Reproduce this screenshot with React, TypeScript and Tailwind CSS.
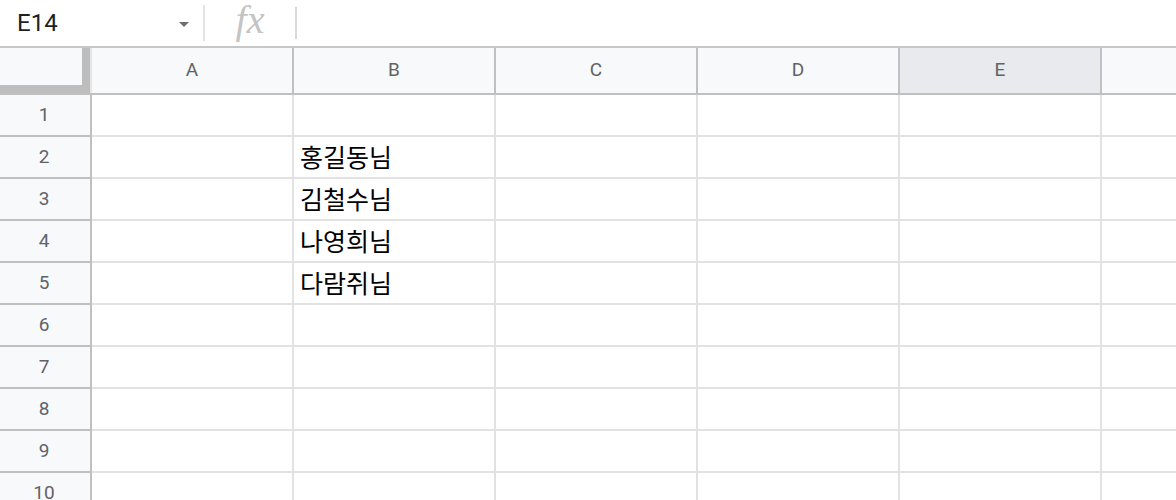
import React from 'react'

const COLS = ['A', 'B', 'C', 'D', 'E', 'F']
const ROWS = [1, 2, 3, 4, 5, 6, 7, 8, 9, 10]
const NAMES: Record<number, string> = {
  2: '홍길동님',
  3: '김철수님',
  4: '나영희님',
  5: '다람쥐님',
}

const latin = { fontFamily: 'Roboto, "Noto Sans", sans-serif' }
const korean = { fontFamily: '"Noto Sans CJK KR", "Noto Sans", sans-serif' }

function FormulaBar() {
  return (
    <div className="flex h-[48px] shrink-0 items-stretch border-b-2 border-[#c7c7c7] bg-white">
      {/* Name box */}
      <div className="flex w-[203px] shrink-0 items-center justify-between pl-[17px] pr-[14px]">
        <span className="text-[24px] leading-none text-[#1f1f1f]" style={latin}>E14</span>
        <svg width="10" height="5" viewBox="0 0 10 5" className="mt-[2px]">
          <path d="M0 0 L10 0 L5 5 Z" fill="#6f6f6f" />
        </svg>
      </div>
      <div className="my-[5px] w-[2px] shrink-0 bg-[#e3e3e3]" />
      {/* fx */}
      <div className="flex w-[90px] shrink-0 items-start justify-center">
        <span
          className="text-[40px] italic leading-[40px] text-[#c4c4c4]"
          style={{ fontFamily: '"Liberation Serif", "DejaVu Serif", serif' }}
        >
          fx
        </span>
      </div>
      <div className="my-[7px] w-[2px] shrink-0 bg-[#d9d9d9]" />
      <div className="flex-1" />
    </div>
  )
}

function Corner() {
  return (
    <div className="flex w-[92px] shrink-0 border-r-2 border-[#e6e6e6]">
      <div className="flex w-[90px] flex-col bg-[#f8f9fa]">
        <div className="flex flex-1">
          <div className="flex-1" />
          <div className="w-[8px] bg-[#bdbdbd]" />
        </div>
        <div className="h-[8px] bg-[#bdbdbd]" />
      </div>
    </div>
  )
}

function HeaderRow() {
  return (
    <div className="flex h-[47px] shrink-0 border-b-2 border-[#c0c0c0]">
      <Corner />
      {COLS.map((c) => (
        <div
          key={c}
          className={
            'flex w-[202px] shrink-0 items-center justify-center border-r-2 border-[#c0c0c0] text-[19px] text-[#5f6368] ' +
            (c === 'E' ? 'bg-[#e8eaed]' : 'bg-[#f8f9fa]')
          }
          style={latin}
        >
          {c}
        </div>
      ))}
    </div>
  )
}

function Row({ n }: { n: number }) {
  return (
    <div className="flex h-[42px] shrink-0">
      <div
        className="flex w-[92px] shrink-0 items-center justify-center border-b-2 border-r-2 border-[#c0c0c0] bg-[#f8f9fa] pr-[2px] text-[19px] text-[#5f6368]"
        style={latin}
      >
        {n}
      </div>
      {COLS.map((c) => (
        <div
          key={c}
          className="flex w-[202px] shrink-0 items-center border-b-2 border-r-2 border-[#e2e2e2] bg-white pl-[6px] text-[25px] text-black"
          style={korean}
        >
          {c === 'B' ? NAMES[n] : null}
        </div>
      ))}
    </div>
  )
}

export default function App() {
  return (
    <div className="flex h-[500px] w-[1176px] flex-col overflow-hidden bg-white">
      <FormulaBar />
      <HeaderRow />
      {ROWS.map((n) => (
        <Row key={n} n={n} />
      ))}
    </div>
  )
}
